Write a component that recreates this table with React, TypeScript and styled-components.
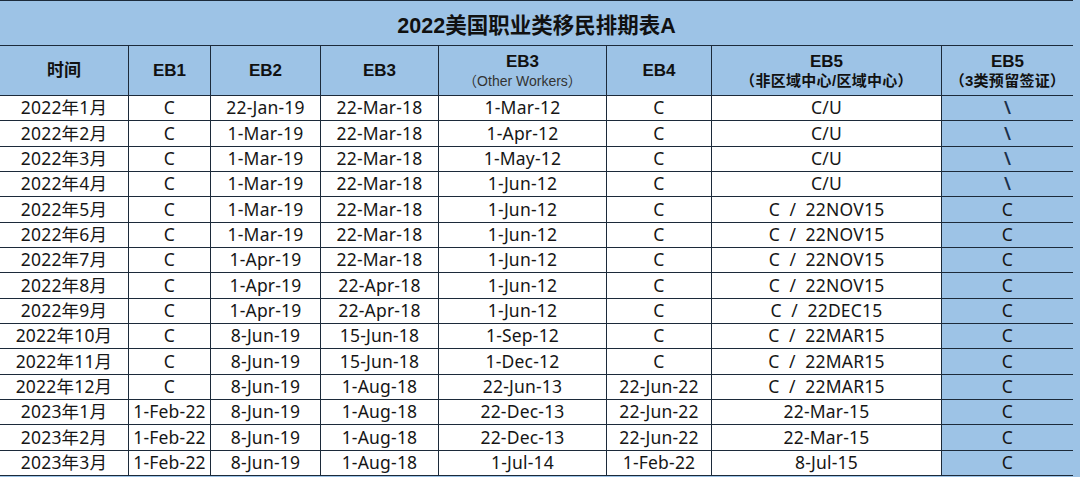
import styled, { createGlobalStyle } from "styled-components";

const GlobalStyle = createGlobalStyle`
  html, body {
    margin: 0;
    padding: 0;
    background: #9dc3e6;
  }
`;

// column widths without the 1px rule between them
const COLS = [128, 81, 109, 117, 167, 104, 229, 131];

type Row = [string, string, string, string, string, string, string, string];

const ROWS: Row[] = [
  ["2022年1月", "C", "22-Jan-19", "22-Mar-18", "1-Mar-12", "C", "C/U", "\\"],
  ["2022年2月", "C", "1-Mar-19", "22-Mar-18", "1-Apr-12", "C", "C/U", "\\"],
  ["2022年3月", "C", "1-Mar-19", "22-Mar-18", "1-May-12", "C", "C/U", "\\"],
  ["2022年4月", "C", "1-Mar-19", "22-Mar-18", "1-Jun-12", "C", "C/U", "\\"],
  ["2022年5月", "C", "1-Mar-19", "22-Mar-18", "1-Jun-12", "C", "C  /  22NOV15", "C"],
  ["2022年6月", "C", "1-Mar-19", "22-Mar-18", "1-Jun-12", "C", "C  /  22NOV15", "C"],
  ["2022年7月", "C", "1-Apr-19", "22-Mar-18", "1-Jun-12", "C", "C  /  22NOV15", "C"],
  ["2022年8月", "C", "1-Apr-19", "22-Apr-18", "1-Jun-12", "C", "C  /  22NOV15", "C"],
  ["2022年9月", "C", "1-Apr-19", "22-Apr-18", "1-Jun-12", "C", "C  /  22DEC15", "C"],
  ["2022年10月", "C", "8-Jun-19", "15-Jun-18", "1-Sep-12", "C", "C  /  22MAR15", "C"],
  ["2022年11月", "C", "8-Jun-19", "15-Jun-18", "1-Dec-12", "C", "C  /  22MAR15", "C"],
  ["2022年12月", "C", "8-Jun-19", "1-Aug-18", "22-Jun-13", "22-Jun-22", "C  /  22MAR15", "C"],
  ["2023年1月", "1-Feb-22", "8-Jun-19", "1-Aug-18", "22-Dec-13", "22-Jun-22", "22-Mar-15", "C"],
  ["2023年2月", "1-Feb-22", "8-Jun-19", "1-Aug-18", "22-Dec-13", "22-Jun-22", "22-Mar-15", "C"],
  ["2023年3月", "1-Feb-22", "8-Jun-19", "1-Aug-18", "1-Jul-14", "1-Feb-22", "8-Jul-15", "C"],
];

export default function App() {
  return (
    <>
      <GlobalStyle />
      <S.Sheet>
        <S.Title>2022美国职业类移民排期表A</S.Title>
        <S.Head>时间</S.Head>
        <S.Head>EB1</S.Head>
        <S.Head>EB2</S.Head>
        <S.Head>EB3</S.Head>
        <S.Head>
          EB3
          <S.SubLight>（Other Workers）</S.SubLight>
        </S.Head>
        <S.Head>EB4</S.Head>
        <S.Head>
          EB5
          <S.SubBold>（非区域中心/区域中心）</S.SubBold>
        </S.Head>
        <S.Head>
          EB5
          <S.SubBold>（3类预留签证）</S.SubBold>
        </S.Head>
        {ROWS.map((row, r) =>
          row.map((cell, c) => (
            <S.Cell key={`${r}-${c}`} $tinted={c === 7} $slash={cell === "\\"}>
              {cell}
            </S.Cell>
          ))
        )}
      </S.Sheet>
    </>
  );
}

const S = {
  Sheet: styled.div`
    display: grid;
    width: max-content;
    grid-template-columns: ${COLS.map((w) => `${w}px`).join(" ")};
    grid-template-rows: 44px 49px repeat(15, 24.33px);
    gap: 1px;
    padding: 1px 0 1px 1px;
    margin-left: -1px;
    background: #1c2a3a;
    font-family: "Noto Sans", "Noto Sans CJK SC", sans-serif;
    color: #161616;
  `,

  Title: styled.div`
    grid-column: 1 / -1;
    display: flex;
    align-items: center;
    justify-content: center;
    background: #9dc3e6;
    font-family: "Liberation Sans", "Noto Sans CJK SC", sans-serif;
    font-weight: 700;
    font-size: 21.5px;
    color: #111;
    padding-top: 1px;
  `,

  Head: styled.div`
    display: flex;
    flex-direction: column;
    align-items: center;
    justify-content: center;
    background: #9dc3e6;
    font-family: "Liberation Sans", "Noto Sans CJK SC", sans-serif;
    font-weight: 700;
    font-size: 17px;
    line-height: 20px;
    color: #111;
  `,

  SubLight: styled.span`
    font-weight: 400;
    font-size: 14px;
    line-height: 18px;
    color: #333;
  `,

  SubBold: styled.span`
    font-weight: 700;
    font-size: 15px;
    line-height: 18px;
    letter-spacing: 0.3px;
  `,

  Cell: styled.div<{ $tinted: boolean; $slash: boolean }>`
    display: flex;
    align-items: center;
    justify-content: center;
    white-space: pre;
    font-size: 17.5px;
    letter-spacing: 0.2px;
    line-height: 1;
    background: ${(p) => (p.$tinted ? "#9dc3e6" : "#ffffff")};
    color: ${(p) => (p.$slash ? "#1b2f4a" : "#161616")};
    font-weight: ${(p) => (p.$slash ? 600 : 400)};
  `,
};
